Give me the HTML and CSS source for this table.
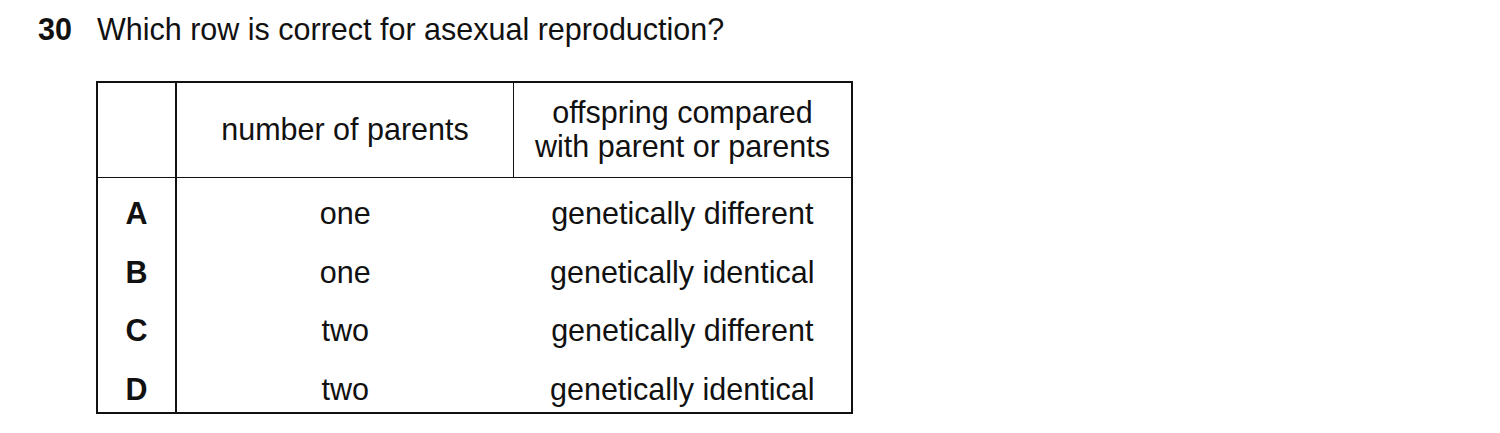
FILE: index.html
```html
<!DOCTYPE html>
<html>
<head>
<meta charset="utf-8">
<link rel="stylesheet" href="styles.css">
</head>
<body>
<div class="question">
  <div class="qhead">
    <span class="qnum">30</span>
    <span class="qtext">Which row is correct for asexual reproduction?</span>
  </div>
  <table class="grid">
    <thead>
      <tr>
        <th class="c-key"></th>
        <th class="c-num">number of parents</th>
        <th class="c-off">offspring compared<br>with parent or parents</th>
      </tr>
    </thead>
    <tbody>
      <tr><td class="c-key">A</td><td>one</td><td>genetically different</td></tr>
      <tr><td class="c-key">B</td><td>one</td><td>genetically identical</td></tr>
      <tr><td class="c-key">C</td><td>two</td><td>genetically different</td></tr>
      <tr><td class="c-key">D</td><td>two</td><td>genetically identical</td></tr>
    </tbody>
  </table>
</div>
</body>
</html>
```

FILE: styles.css
```css
html, body {
  margin: 0;
  padding: 0;
  background: #ffffff;
}
body {
  font-family: "Liberation Sans", Arial, sans-serif;
  color: #111111;
}
.question {
  padding: 12px 0 0 38px;
}
.qhead {
  display: flex;
  align-items: baseline;
  font-size: 30.5px;
  line-height: 34px;
}
.qnum {
  font-weight: bold;
  width: 59px;
}
.grid {
  margin: 35px 0 0 58px;
  border-collapse: collapse;
  border: 2px solid #111;
  font-size: 30.5px;
}
.grid th, .grid td {
  font-weight: normal;
  text-align: center;
  padding: 0;
}
.grid th {
  height: 92px;
  padding-bottom: 2px;
  line-height: 34px;
  border-bottom: 1px solid #111;
  vertical-align: middle;
}
.grid td {
  height: 46.5px;
  padding-top: 12px;
  line-height: 34px;
  vertical-align: middle;
}
.c-key {
  width: 77px;
  border-right: 2px solid #111;
}
.grid td.c-key {
  font-weight: bold;
}
.c-num {
  width: 336px;
  border-right: 1px solid #111;
}
.c-off {
  width: 337px;
}
```
